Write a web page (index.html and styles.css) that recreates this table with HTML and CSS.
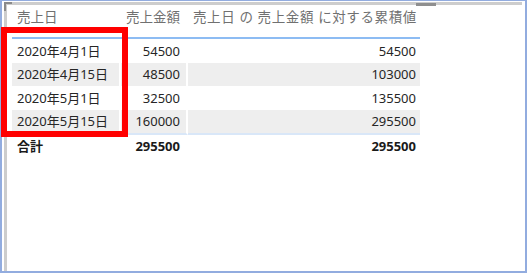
FILE: index.html
```html
<!DOCTYPE html>
<html lang="ja">
<head>
<meta charset="utf-8">
<link rel="stylesheet" href="styles.css">
</head>
<body>
<div class="frame">
  <div class="visual">
    <span class="corner"></span>
    <span class="grip"></span>
    <table class="matrix">
      <colgroup>
        <col class="w1">
        <col class="w2">
        <col class="w3">
      </colgroup>
      <thead>
        <tr>
          <th class="c1">売上日</th>
          <th class="c2 num">売上金額</th>
          <th class="c3">売上日 の 売上金額 に対する累積値</th>
        </tr>
      </thead>
      <tbody>
        <tr>
          <td class="c1">2020年4月1日</td>
          <td class="c2 num">54500</td>
          <td class="c3 num">54500</td>
        </tr>
        <tr class="alt">
          <td class="c1">2020年4月15日</td>
          <td class="c2 num">48500</td>
          <td class="c3 num">103000</td>
        </tr>
        <tr>
          <td class="c1">2020年5月1日</td>
          <td class="c2 num">32500</td>
          <td class="c3 num">135500</td>
        </tr>
        <tr class="alt last">
          <td class="c1">2020年5月15日</td>
          <td class="c2 num">160000</td>
          <td class="c3 num">295500</td>
        </tr>
      </tbody>
      <tfoot>
        <tr>
          <td class="c1">合計</td>
          <td class="c2 num">295500</td>
          <td class="c3 num">295500</td>
        </tr>
      </tfoot>
    </table>
    <span class="highlight"></span>
  </div>
</div>
</body>
</html>
```

FILE: styles.css
```css
html, body {
  margin: 0;
  padding: 0;
  background: #ffffff;
}
body {
  width: 527px;
  height: 273px;
  overflow: hidden;
  font-family: "Noto Sans", "Noto Sans CJK JP", sans-serif;
}
.frame {
  box-sizing: border-box;
  width: 527px;
  height: 273px;
  border: 2px solid #92acdf;
  border-top-width: 1px;
  padding: 1px 3px 0 2px;
  background: #fff;
}
.visual {
  position: relative;
  box-sizing: border-box;
  height: 100%;
  border-top: 3px solid #cdcdcd;
  border-left: 3px solid #cdcdcd;
  padding-left: 5px;
}
.corner {
  position: absolute;
  left: -3px;
  top: -3px;
  width: 6px;
  height: 7px;
  border-top: 2px solid #8a8a8a;
  border-left: 2px solid #8a8a8a;
}
.grip {
  position: absolute;
  left: 409px;
  top: -2px;
  width: 20px;
  height: 3px;
  background: #8f8f8f;
}
.matrix {
  border-collapse: separate;
  border-spacing: 0;
  font-size: 13px;
  color: #262626;
  table-layout: fixed;
  width: 408px;
}
.w1 { width: 109px; }
.w2 { width: 67px; }
.w3 { width: 232px; }
.matrix th, .matrix td {
  padding: 0 0 0 5px;
  white-space: nowrap;
  font-weight: normal;
  text-align: left;
  line-height: 16px;
}
.matrix .c1, .matrix .c2 { border-right: 2px solid #fff; }
.matrix .num { text-align: right; }
.matrix .c2 { padding-right: 6px; }
.matrix .c3 { padding-right: 4px; }
.matrix thead th {
  color: #707070;
  font-size: 13.5px;
  vertical-align: top;
  padding-top: 4px;
  height: 34px;
  border-bottom: 2px solid #8dbcf3;
  box-sizing: border-box;
}
.matrix thead th.c3 { letter-spacing: 0.6px; padding-left: 5px; }
.matrix thead th.c1, .matrix thead th.c2 { border-right: 0; }
.matrix thead th.c2 { padding-right: 8px; }
.matrix tbody td {
  height: 23.5px;
  vertical-align: middle;
}
.matrix tr.alt td { background: #eeeeee; }
.matrix tr.last td { border-bottom: 2px solid #d9e7f8; }
.matrix tfoot td {
  font-weight: bold;
  color: #1a1a1a;
  height: 21px;
  vertical-align: middle;
}
.highlight {
  position: absolute;
  left: -6px;
  top: 22px;
  width: 115px;
  height: 98px;
  border: 6px solid #ff0000;
}
```
